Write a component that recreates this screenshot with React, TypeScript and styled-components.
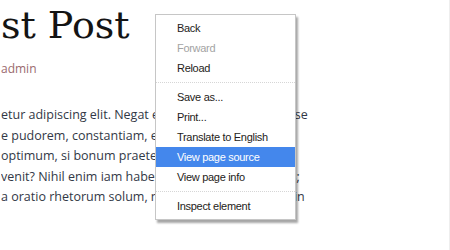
import React from "react";
import styled, { createGlobalStyle } from "styled-components";

const Global = createGlobalStyle`
  html, body { margin: 0; padding: 0; background: #ffffff; }
  body { width: 450px; height: 250px; overflow: hidden; }
`;

const Page = styled.div`
  position: relative;
  width: 450px;
  height: 250px;
  box-sizing: border-box;
  border-right: 1px solid #eeeeee;
  overflow: hidden;
  background: #ffffff;
`;

const Article = styled.article`
  display: flex;
  flex-direction: column;
  padding-left: 1px;
`;

const Title = styled.h1`
  margin: 0;
  font-family: "DejaVu Serif", serif;
  font-weight: normal;
  font-size: 38px;
  line-height: 50px;
  color: #141414;
  white-space: nowrap;
`;

const Meta = styled.div`
  margin-top: 10px;
  font-family: "Open Sans", sans-serif;
  font-size: 12px;
  line-height: 18px;
  color: #9a6a6e;
`;

const Body = styled.div`
  margin-top: 27px;
  display: flex;
  flex-direction: column;
  width: 320px;
  font-family: "Open Sans", sans-serif;
  font-size: 12.5px;
  line-height: 20.5px;
  color: #323846;
`;

const Line = styled.div`
  white-space: nowrap;
  overflow: hidden;
`;

const Menu = styled.ul`
  position: absolute;
  left: 155px;
  top: 14px;
  width: 139px;
  margin: 0;
  padding: 3px 0;
  list-style: none;
  background: #ffffff;
  border: 1px solid #c6c6c6;
  box-shadow: 2px 3px 2px rgba(0, 0, 0, 0.35);
  font-family: "Liberation Sans", sans-serif;
  font-size: 11px;
  letter-spacing: -0.3px;
`;

const Item = styled.li<{ $disabled?: boolean; $active?: boolean }>`
  height: 20px;
  line-height: 20px;
  padding-left: 21px;
  color: ${(p) => (p.$active ? "#ffffff" : p.$disabled ? "#a3a3a3" : "#241c20")};
  background: ${(p) => (p.$active ? "#4487ec" : "transparent")};
  white-space: nowrap;
`;

const Separator = styled.li`
  height: 0;
  margin: 4px 0;
  border-top: 1px dotted #d6d6d6;
`;

export default function App() {
  return (
    <Page>
      <Global />
      <Article>
        <Title>st Post</Title>
        <Meta>admin</Meta>
        <Body>
          <Line>etur adipiscing elit. Negat esse eam inquit propter se</Line>
          <Line>e pudorem, constantiam, et omnia</Line>
          <Line>optimum, si bonum praeterea nihil</Line>
          <Line>venit? Nihil enim iam habes, quod ad corpus refers;</Line>
          <Line>a oratio rhetorum solum, non philosophorum sed in</Line>
        </Body>
      </Article>
      <Menu>
        <Item>Back</Item>
        <Item $disabled>Forward</Item>
        <Item>Reload</Item>
        <Separator />
        <Item>Save as...</Item>
        <Item>Print...</Item>
        <Item>Translate to English</Item>
        <Item $active>View page source</Item>
        <Item>View page info</Item>
        <Separator />
        <Item>Inspect element</Item>
      </Menu>
    </Page>
  );
}
